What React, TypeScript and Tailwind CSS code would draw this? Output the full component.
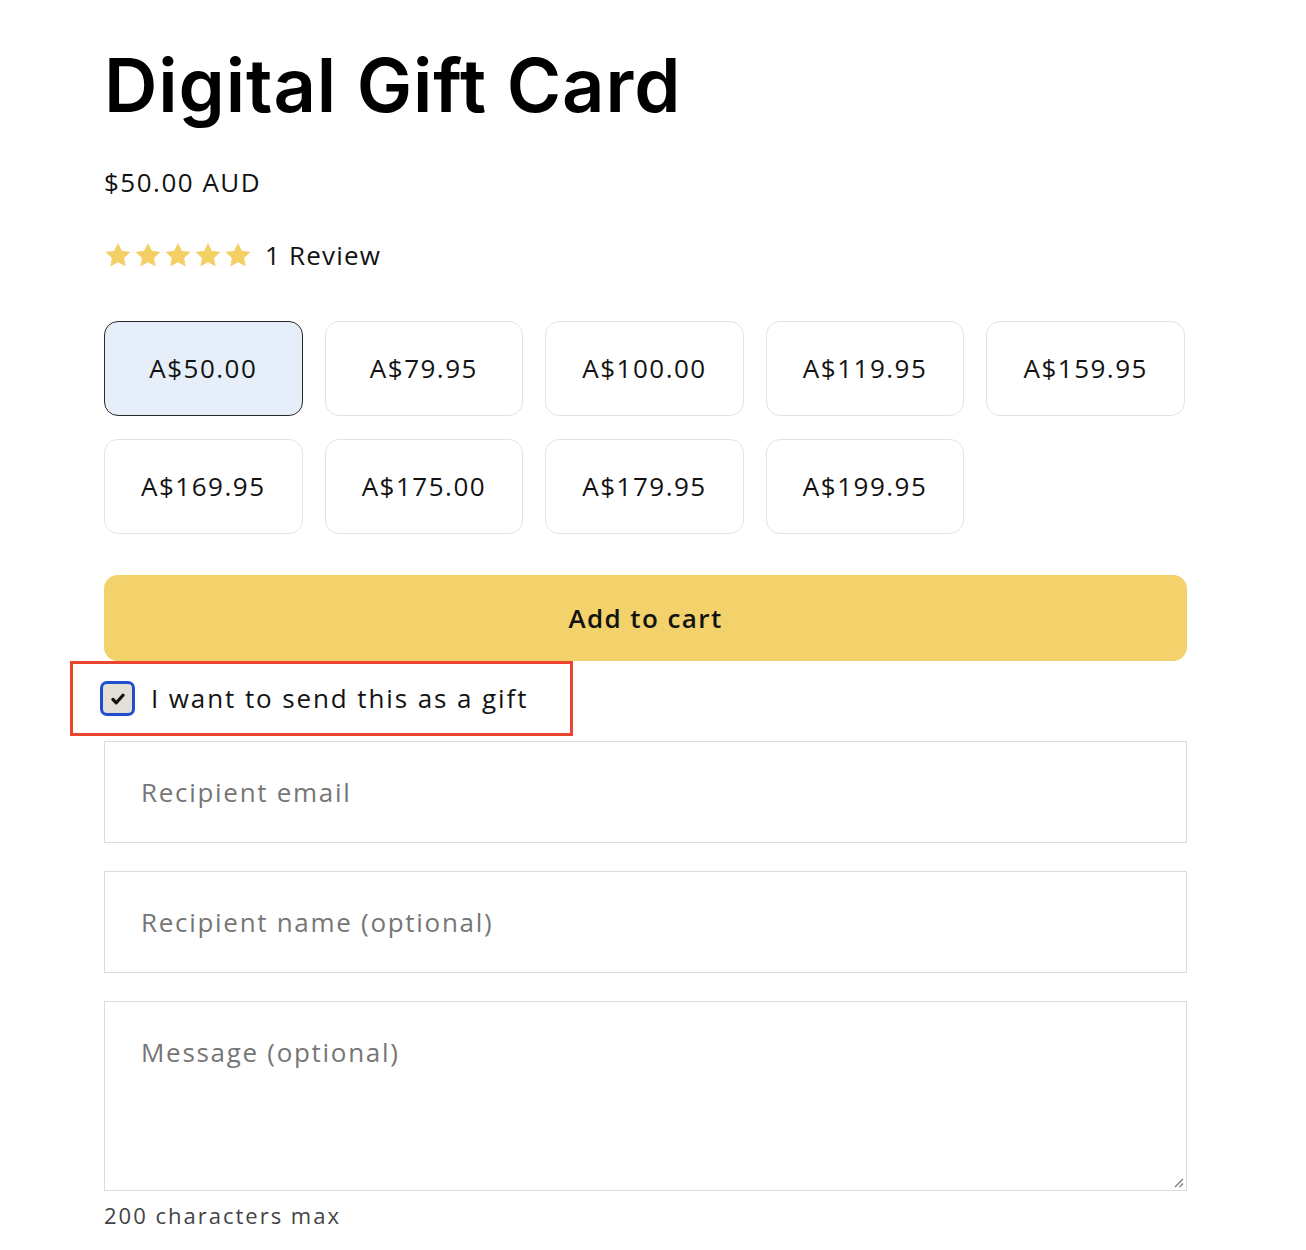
import React from "react";

const prices = ["A$50.00", "A$79.95", "A$100.00", "A$119.95", "A$159.95", "A$169.95", "A$175.00", "A$179.95", "A$199.95"];

function Star() {
  return (
    <svg width="28" height="26" viewBox="0 0 24 23" className="block">
      <path d="M12 0.8l3.4 7 7.6 1-5.6 5.3 1.4 7.6L12 18l-6.8 3.7 1.4-7.6L1 8.8l7.6-1z" fill="#f3cf66" />
    </svg>
  );
}

export default function App() {
  const body = { fontFamily: '"Open Sans", "Liberation Sans", sans-serif' };
  return (
    <div className="min-h-[1250px] bg-white text-[#121212]" style={body}>
      <div className="w-[1083px] ml-[104px] pt-[40px]">
        <h1 className="text-[74px] leading-[90px] font-semibold tracking-[0.9px] text-black" style={{ fontFamily: 'Inter, "Liberation Sans", sans-serif' }}>
          Digital Gift Card
        </h1>
        <div className="mt-[36px] text-[26px] leading-[32px] tracking-[1.5px]">$50.00 AUD</div>
        <div className="mt-[42px] flex items-center h-[30px]">
          <div className="flex gap-[2px]">
            {[0, 1, 2, 3, 4].map((i) => (
              <Star key={i} />
            ))}
          </div>
          <span className="ml-[13px] text-[26px] tracking-[1.2px]">1 Review</span>
        </div>
        <div className="mt-[51px] w-[1081px] grid grid-cols-5 gap-x-[22px] gap-y-[23px]">
          {prices.map((p, i) => (
            <div
              key={p}
              className={
                "h-[95px] rounded-[14px] flex items-center justify-center text-[26px] tracking-[1.5px] " +
                (i === 0 ? "bg-[#e6eef9] border-[1.5px] border-[#2a2a2a]" : "bg-white border-[1.5px] border-[#e3e3e3]")
              }
            >
              {p}
            </div>
          ))}
        </div>
        <div className="mt-[41px] h-[86px] rounded-[14px] bg-[#f3d16b] flex items-center justify-center text-[26px] font-semibold tracking-[1.4px]">
          Add to cart
        </div>
        <div className="-ml-[34px] w-[503px] h-[75px] border-[3px] border-[#e8442e] flex items-center pl-[27px]">
          <div className="w-[35px] h-[35px] rounded-[7px] border-[3px] border-[#1f4fd1] bg-[#e3dfd6] flex items-center justify-center">
            <svg width="14" height="12" viewBox="0 0 14 12">
              <path d="M2 6.5l3.3 3.3 6.7-7.6" fill="none" stroke="#111" strokeWidth="3.2" strokeLinecap="round" strokeLinejoin="round" />
            </svg>
          </div>
          <span className="ml-[16px] text-[26px] tracking-[1.9px]">I want to send this as a gift</span>
        </div>
        <div className="mt-[5px] flex flex-col gap-[28px]">
          <div className="h-[102px] border-[1.5px] border-[#dcdcdc] flex items-center pl-[36px] text-[26px] tracking-[1.7px] text-[#767676]">
            Recipient email
          </div>
          <div className="h-[102px] border-[1.5px] border-[#dcdcdc] flex items-center pl-[36px] text-[26px] tracking-[1.7px] text-[#767676]">
            Recipient name (optional)
          </div>
          <div className="relative h-[190px] border-[1.5px] border-[#dcdcdc] pl-[36px] pt-[31px] text-[26px] tracking-[1.7px] text-[#767676]">
            Message (optional)
            <svg className="absolute right-[2px] bottom-[2px]" width="12" height="12" viewBox="0 0 12 12">
              <path d="M11 3L3 11M11 7.5L7.5 11" stroke="#777" strokeWidth="1.2" />
            </svg>
          </div>
        </div>
        <div className="mt-[8px] text-[22px] tracking-[2px] text-[#444]">200 characters max</div>
      </div>
    </div>
  );
}
